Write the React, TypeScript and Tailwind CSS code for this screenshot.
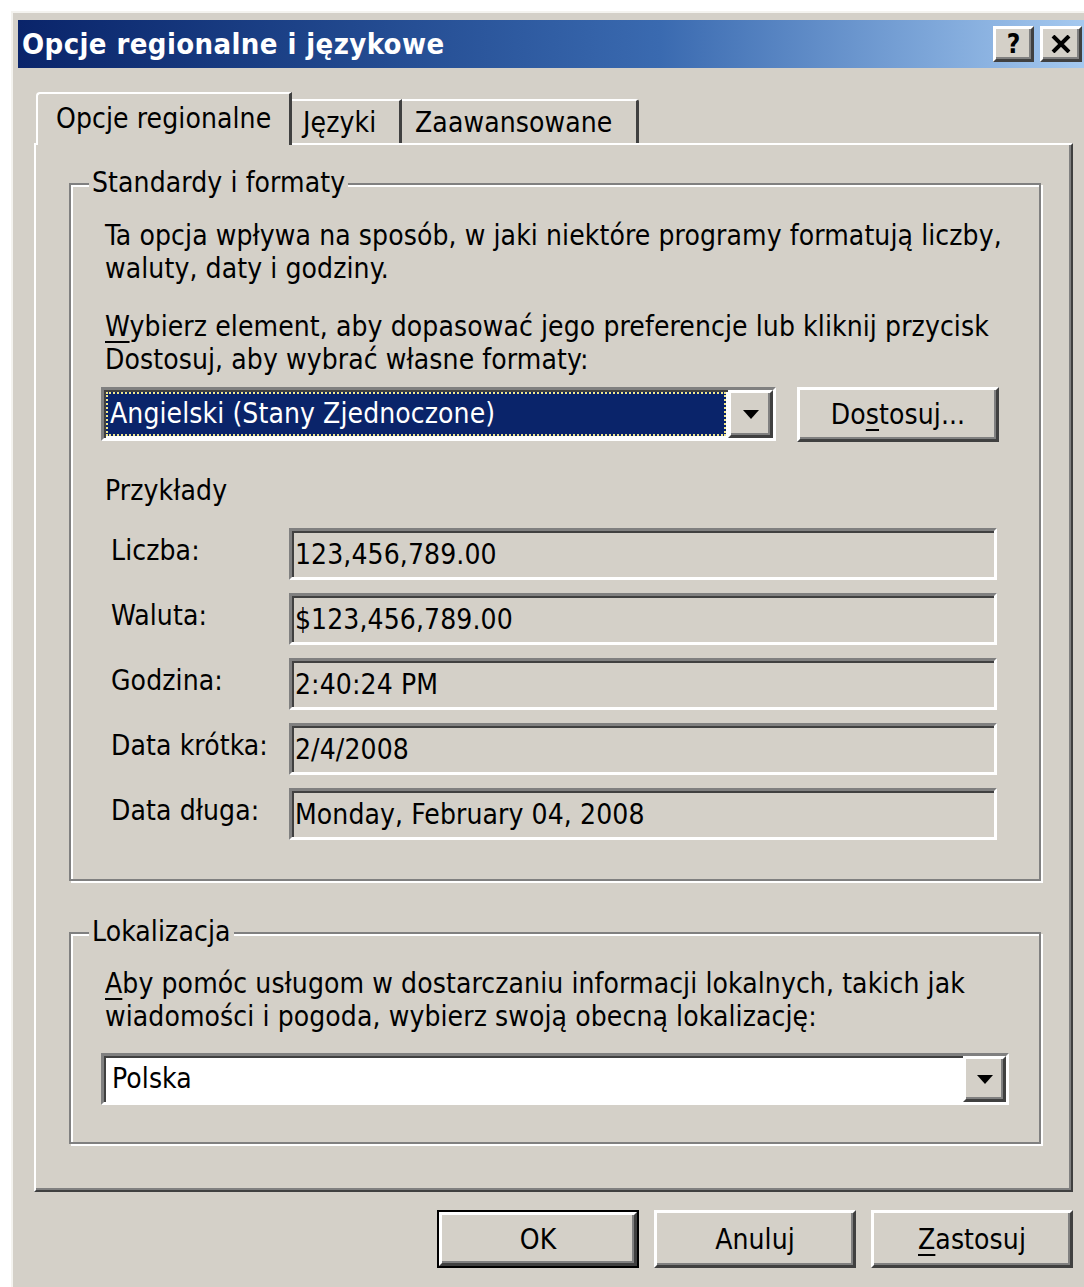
import type { ReactNode } from 'react';

// classic 3D edges
const raised =
  'border-[3px] border-t-white border-l-white border-b-[#404040] border-r-[#404040] shadow-[inset_-2px_-2px_0_#808080]';
const sunken =
  'border-[3px] border-t-[#808080] border-l-[#808080] border-b-white border-r-white shadow-[inset_2px_2px_0_#404040]';

const samples = [
  { label: 'Liczba:', value: '123,456,789.00' },
  { label: 'Waluta:', value: '$123,456,789.00' },
  { label: 'Godzina:', value: '2:40:24 PM' },
  { label: 'Data krótka:', value: '2/4/2008' },
  { label: 'Data długa:', value: 'Monday, February 04, 2008' },
];

const DropArrow = () => (
  <svg width="16" height="9" viewBox="0 0 16 9">
    <polygon points="0,0 16,0 8,9" fill="#000" />
  </svg>
);

const GroupBox = ({
  title,
  className,
  children,
}: {
  title: string;
  className: string;
  children: ReactNode;
}) => (
  <div
    className={`relative border-2 border-[#808080] shadow-[inset_2px_2px_0_#ffffff,2px_2px_0_#ffffff] ${className}`}
  >
    <span className="absolute -top-[19px] left-[18px] bg-[#d4d0c8] px-[3px] leading-[33px]">
      {title}
    </span>
    {children}
  </div>
);

const Button = ({
  children,
  isDefault,
  className = 'h-[58px]',
}: {
  children: ReactNode;
  isDefault?: boolean;
  className?: string;
}) => (
  <div className={`w-[202px] ${className} ${isDefault ? 'border-2 border-black' : ''}`}>
    <div className={`h-full flex items-center justify-center bg-[#d4d0c8] ${raised}`}>
      {children}
    </div>
  </div>
);

export default function App() {
  return (
    <div className="w-[1084px] h-[1287px] overflow-hidden bg-white font-['DejaVu_Sans',sans-serif] font-stretch-condensed text-[28px] tracking-[0.1px] leading-[33px] text-black">
      <div className="ml-[11px] mt-[11px] w-[1100px] h-[1300px] bg-[#d4d0c8] border-t-2 border-l-2 border-[#f4f3ef] pl-[5px] pt-[7px]">
        {/* Title bar */}
        <div className="w-[1070px] h-[48px] flex items-center justify-between pl-[4px] pr-[6px] bg-gradient-to-r from-[#0a246a] via-[#3a6ab0] via-60% to-[#a6caf0]">
          <span className="text-white font-bold text-[29px] tracking-[0.4px]">
            Opcje regionalne i językowe
          </span>
          <div className="flex gap-[6px]">
            <div
              className={`w-[41px] h-[36px] bg-[#d4d0c8] flex items-center justify-center font-bold text-[26px] leading-none ${raised}`}
            >
              ?
            </div>
            <div className={`w-[42px] h-[36px] bg-[#d4d0c8] flex items-center justify-center ${raised}`}>
              <svg width="20" height="18" viewBox="0 0 20 18">
                <path d="M2 1 L18 17 M18 1 L2 17" stroke="#000" strokeWidth="4" />
              </svg>
            </div>
          </div>
        </div>

        <div className="pl-[16px]">
          {/* Tabs */}
          <div className="mt-[24px] h-[51px] flex items-end relative z-10 pl-[2px]">
            <div className="h-[53px] -mb-[2px] w-[256px] bg-[#d4d0c8] border-t-2 border-l-2 border-white rounded-tl-[4px] border-r-[3px] border-r-[#404040] pl-[18px] pt-[8px]">
              Opcje regionalne
            </div>
            <div className="h-[44px] w-[110px] border-t-2 border-white border-r-[3px] border-r-[#404040] pl-[11px] pt-[5px]">
              Języki
            </div>
            <div className="h-[44px] w-[237px] border-t-2 border-white border-r-[3px] border-r-[#404040] rounded-tr-[3px] pl-[13px] pt-[5px]">
              Zaawansowane
            </div>
          </div>

          {/* Tab page */}
          <div className="w-[1039px] h-[1049px] border-t-2 border-l-2 border-white border-b-2 border-r-2 border-b-[#404040] border-r-[#404040] shadow-[inset_-2px_-2px_0_#808080] pl-[33px] pt-[38px]">
            <GroupBox title="Standardy i formaty" className="w-[972px] h-[698px] pl-[34px] pt-[34px]">
              <p>
                Ta opcja wpływa na sposób, w jaki niektóre programy formatują liczby,
                <br />
                waluty, daty i godziny.
              </p>
              <p className="mt-[25px]">
                <span className="underline underline-offset-[5px]">W</span>ybierz element, aby
                dopasować jego preferencje lub kliknij przycisk
                <br />
                Dostosuj, aby wybrać własne formaty:
              </p>
              <div className="mt-[11px] -ml-[4px] flex items-start gap-[21px]">
                <div className={`w-[675px] h-[54px] bg-white flex ${sunken}`}>
                  <div className="flex-1 m-[2px] bg-[#0a246a] outline-dotted outline-2 outline-[#f0e68c] -outline-offset-2 text-white pl-[4px] leading-[44px]">
                    Angielski (Stany Zjednoczone)
                  </div>
                  <div className={`w-[45px] bg-[#d4d0c8] flex items-center justify-center ${raised}`}>
                    <DropArrow />
                  </div>
                </div>
                <Button className="h-[55px]">
                  Do<span className="underline underline-offset-[5px]">s</span>tosuj...
                </Button>
              </div>
              <p className="mt-[32px]">Przykłady</p>
              <div className="mt-[21px] flex flex-col gap-[13px]">
                {samples.map((s) => (
                  <div key={s.label} className="flex items-center">
                    <span className="w-[184px] pl-[6px] -mt-[7px]">{s.label}</span>
                    <div className={`w-[708px] h-[52px] pl-[3px] flex items-center ${sunken}`}>
                      {s.value}
                    </div>
                  </div>
                ))}
              </div>
            </GroupBox>

            <GroupBox title="Lokalizacja" className="mt-[51px] w-[972px] h-[212px] pl-[34px] pt-[33px]">
              <p>
                <span className="underline underline-offset-[5px]">A</span>by pomóc usługom w
                dostarczaniu informacji lokalnych, takich jak
                <br />
                wiadomości i pogoda, wybierz swoją obecną lokalizację:
              </p>
              <div className={`mt-[20px] -ml-[4px] w-[908px] h-[52px] bg-white flex ${sunken}`}>
                <div className="flex-1 pl-[8px] leading-[46px]">Polska</div>
                <div className={`w-[43px] bg-[#d4d0c8] flex items-center justify-center ${raised}`}>
                  <DropArrow />
                </div>
              </div>
            </GroupBox>
          </div>

          {/* Dialog buttons */}
          <div className="w-[1039px] mt-[18px] flex justify-end gap-[15px]">
            <Button isDefault>OK</Button>
            <Button>Anuluj</Button>
            <Button>
              <span className="underline underline-offset-[5px]">Z</span>astosuj
            </Button>
          </div>
        </div>
      </div>
    </div>
  );
}
